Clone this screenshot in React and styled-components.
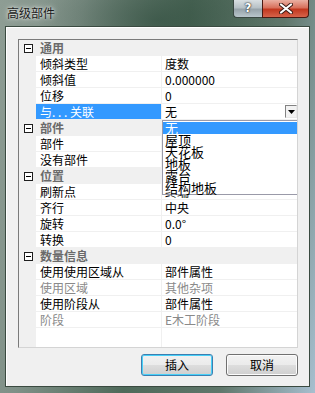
import React from "react";
import styled, { createGlobalStyle } from "styled-components";

const GlobalStyle = createGlobalStyle`
  html, body {
    margin: 0;
    padding: 0;
    width: 315px;
    height: 393px;
    overflow: hidden;
  }
  body {
    font-family: "Noto Sans CJK SC", "Noto Sans", sans-serif;
    font-size: 12px;
  }
`;

const rows = [
  { cat: "通用" },
  { name: "倾斜类型", value: "度数" },
  { name: "倾斜值", value: "0.000000" },
  { name: "位移", value: "0" },
  { name: "与. . . 关联", value: "无", selected: true },
  { cat: "部件" },
  { name: "部件", value: "" },
  { name: "没有部件", value: "" },
  { cat: "位置" },
  { name: "刷新点", value: "终端" },
  { name: "齐行", value: "中央" },
  { name: "旋转", value: "0.0°" },
  { name: "转换", value: "0" },
  { cat: "数量信息" },
  { name: "使用使用区域从", value: "部件属性" },
  { name: "使用区域", value: "其他杂项", disabled: true },
  { name: "使用阶段从", value: "部件属性" },
  { name: "阶段", value: "E木工阶段", disabled: true },
];

const options = ["无", "屋顶", "天花板", "地板", "露台", "结构地板"];

const Window = () => {
  return (
    <Frame>
      <GlobalStyle />
      <TitleBar>
        <Title>高级部件</Title>
        <Captions>
          <HelpButton>?</HelpButton>
          <CloseButton>
            <svg width="14" height="11" viewBox="0 0 14 11">
              <path
                d="M2 1.5 L12 9.5 M12 1.5 L2 9.5"
                stroke="#3a1a14"
                strokeWidth="4"
                strokeLinecap="round"
              />
              <path
                d="M2 1.5 L12 9.5 M12 1.5 L2 9.5"
                stroke="#ffffff"
                strokeWidth="2.2"
                strokeLinecap="round"
              />
            </svg>
          </CloseButton>
        </Captions>
      </TitleBar>

      <Client>
        <PropertyGrid>
          {rows.map((row, i) =>
            row.cat ? (
              <CategoryRow key={i}>
                <Gutter $cat>
                  <Expander />
                </Gutter>
                <CategoryLabel>{row.cat}</CategoryLabel>
              </CategoryRow>
            ) : (
              <Row key={i}>
                <Gutter />
                <NameCell $selected={row.selected} $disabled={row.disabled}>
                  {row.name}
                </NameCell>
                <ValueCell $disabled={row.disabled}>
                  {row.value}
                  {row.selected && (
                    <DropButton>
                      <svg width="7" height="4" viewBox="0 0 7 4">
                        <path d="M0 0 H7 L3.5 4 Z" fill="#000" />
                      </svg>
                    </DropButton>
                  )}
                </ValueCell>
              </Row>
            )
          )}
          <Filler>
            <Gutter />
            <NameCell />
            <ValueCell />
          </Filler>

          <ListPopup>
            {options.map((opt, i) => (
              <ListItem key={opt} $active={i === 0}>
                {opt}
              </ListItem>
            ))}
          </ListPopup>
        </PropertyGrid>

        <ButtonRow>
          <PushButton $default>插入</PushButton>
          <PushButton>取消</PushButton>
        </ButtonRow>
      </Client>
    </Frame>
  );
};

const Frame = styled.div`
  width: 315px;
  height: 393px;
  box-sizing: border-box;
  padding: 0 5px 6px 5px;
  display: flex;
  flex-direction: column;
  background:
    radial-gradient(ellipse 120px 60px at 50% 20px, rgba(40, 70, 55, 0.55), transparent),
    linear-gradient(100deg, #8e9d94 0%, #7f9087 22%, #4f6a5a 50%, #5f766a 75%, #a7bfcf 100%);
`;

const TitleBar = styled.div`
  height: 26px;
  display: flex;
  align-items: flex-start;
`;

const Title = styled.div`
  padding: 6px 0 0 2px;
  font-size: 12px;
  line-height: 14px;
  color: #1b1b1b;
  text-shadow: 0 0 6px rgba(255, 255, 255, 0.8), 0 0 3px rgba(255, 255, 255, 0.7);
`;

const Captions = styled.div`
  margin-left: auto;
  margin-right: 1px;
  display: flex;
`;

const HelpButton = styled.div`
  width: 29px;
  height: 18px;
  box-sizing: border-box;
  border: 1px solid #3a4842;
  border-top: none;
  border-right: none;
  border-radius: 0 0 0 4px;
  background: linear-gradient(#d9dfe2 0%, #b7c1c6 45%, #97a3aa 55%, #b9c6cc 100%);
  color: #fff;
  font-family: "DejaVu Sans", sans-serif;
  font-weight: bold;
  font-size: 12px;
  line-height: 16px;
  text-align: center;
  text-shadow: 0 0 2px #222, 0 0 1px #000;
`;

const CloseButton = styled.div`
  width: 47px;
  height: 18px;
  box-sizing: border-box;
  border: 1px solid #4a1a12;
  border-top: none;
  border-radius: 0 0 4px 0;
  background: linear-gradient(#eab0a2 0%, #d8715c 45%, #c2381f 55%, #d7634a 100%);
  display: flex;
  align-items: center;
  justify-content: center;
`;

const Client = styled.div`
  flex: 1;
  background: #f0f0f0;
  border: 1px solid #3a4a40;
  box-shadow: inset 1px 1px 0 #ffffff;
  padding: 12px 11px 10px 12px;
  display: flex;
  flex-direction: column;
`;

const PropertyGrid = styled.div`
  position: relative;
  width: 280px;
  height: 309px;
  box-sizing: border-box;
  border: 1px solid #7a7a7a;
  border-right-color: #d4d4d4;
  border-bottom-color: #d4d4d4;
  background: #ffffff;
  display: flex;
  flex-direction: column;
  overflow: hidden;
`;

const rowColumns = `
  display: grid;
  grid-template-columns: 17px 126px 1fr;
`;

const Row = styled.div`
  ${rowColumns}
  height: 16px;
  box-sizing: border-box;
  border-bottom: 1px solid #f0f0f0;
  flex-shrink: 0;
`;

const CategoryRow = styled.div`
  display: flex;
  height: 16px;
  flex-shrink: 0;
  background: #f0f0f0;
`;

const Filler = styled.div`
  ${rowColumns}
  flex: 1;
`;

const Gutter = styled.div`
  background: #f0f0f0;
  display: flex;
  align-items: center;
  justify-content: flex-start;
  padding-left: ${(p) => (p.$cat ? "5px" : "0")};
  width: 17px;
  box-sizing: border-box;
`;

const Expander = styled.div`
  position: relative;
  width: 9px;
  height: 9px;
  box-sizing: border-box;
  border: 1px solid #1e1e1e;
  background: #fff;

  &::after {
    content: "";
    position: absolute;
    left: 1px;
    right: 1px;
    top: 3px;
    height: 1px;
    background: #000;
  }
`;

const CategoryLabel = styled.div`
  padding-left: 4px;
  font-weight: bold;
  color: #6a6a6a;
  line-height: 16px;
`;

const NameCell = styled.div`
  padding-left: 4px;
  line-height: 15px;
  white-space: nowrap;
  overflow: hidden;
  border-right: 1px solid #f0f0f0;
  background: ${(p) => (p.$selected ? "#3399ff" : "#ffffff")};
  color: ${(p) => (p.$selected ? "#ffffff" : p.$disabled ? "#8a8a8a" : "#000000")};
`;

const ValueCell = styled.div`
  position: relative;
  padding-left: 3px;
  line-height: 15px;
  white-space: nowrap;
  overflow: hidden;
  color: ${(p) => (p.$disabled ? "#8a8a8a" : "#000000")};
`;

const DropButton = styled.div`
  position: absolute;
  right: 0;
  top: 1px;
  width: 12px;
  height: 13px;
  box-sizing: border-box;
  border: 1px solid #828282;
  border-right-color: #e8e8e8;
  border-bottom-color: #e8e8e8;
  background: #f2f2f2;
  display: flex;
  align-items: center;
  justify-content: center;
`;

const ListPopup = styled.div`
  position: absolute;
  left: 143px;
  top: 80px;
  width: 136px;
  height: 75px;
  box-sizing: border-box;
  border: 1px solid #9a9aa8;
  background: #ffffff;
  padding-top: 1px;
`;

const ListItem = styled.div`
  height: 12px;
  line-height: 12px;
  font-size: 13px;
  padding-left: 2px;
  white-space: nowrap;
  background: ${(p) => (p.$active ? "#3399ff" : "transparent")};
  color: ${(p) => (p.$active ? "#ffffff" : "#000000")};
`;

const ButtonRow = styled.div`
  margin-top: 6px;
  width: 280px;
  display: flex;
  justify-content: flex-end;
  gap: 13px;
`;

const PushButton = styled.div`
  width: 72px;
  height: 22px;
  box-sizing: border-box;
  border: 1px solid ${(p) => (p.$default ? "#3c7fb1" : "#707070")};
  border-radius: 3px;
  box-shadow: inset 0 0 0 1px ${(p) => (p.$default ? "#48d0f8" : "#fcfcfc")};
  background: linear-gradient(#f2f2f2 0%, #ebebeb 50%, #dddddd 51%, #cfcfcf 100%);
  display: flex;
  align-items: center;
  justify-content: center;
  font-size: 12px;
  line-height: 14px;
  color: #000;
`;

export default Window;
